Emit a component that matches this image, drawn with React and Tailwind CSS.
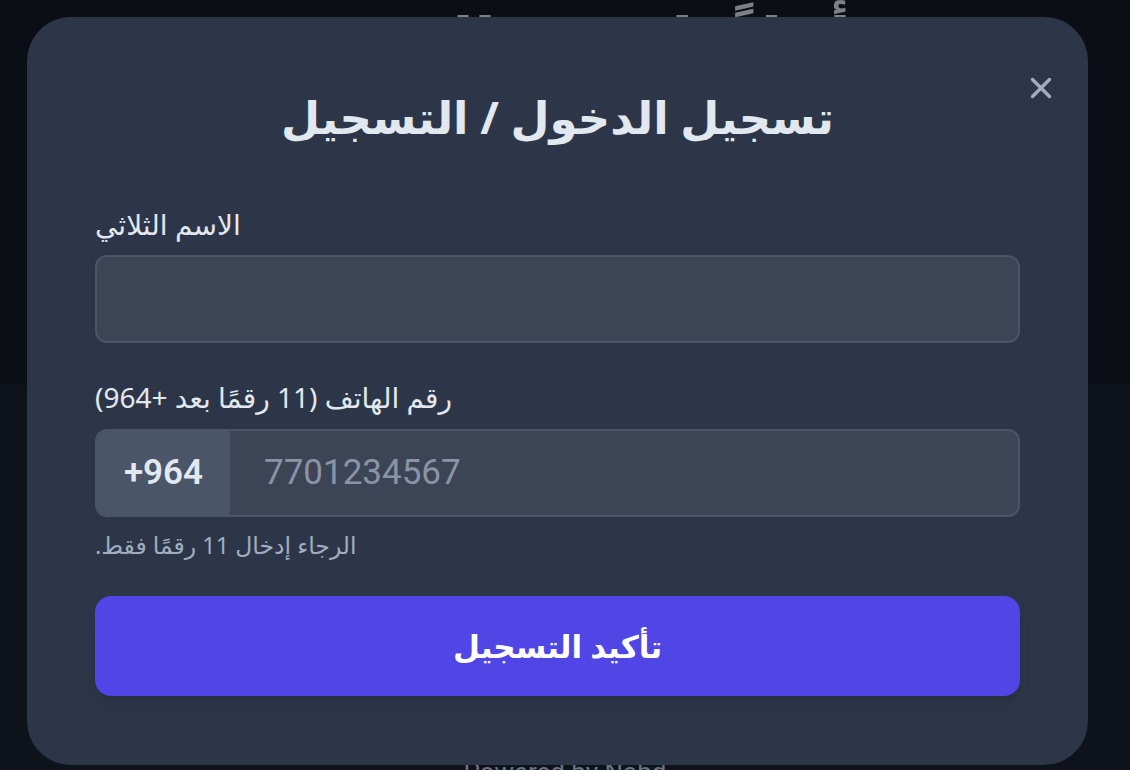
import { X } from 'lucide-react';

export default function App() {
  return (
    <div className="relative w-[1130px] h-[770px] overflow-hidden bg-[#0b0e14] font-['Noto_Sans','DejaVu_Sans',sans-serif]">
      {/* page behind the dialog */}
      <div className="flex flex-col h-full">
        <div className="h-[385px] flex justify-center">
          <h1 dir="rtl" className="mt-[0px] text-[64px] leading-[80px] font-bold text-[#7b8089]">
            أهلاً بك في المنصة
          </h1>
        </div>
        <div className="flex-1 bg-[#0e121a] flex items-end justify-center">
          <p className="mb-[-22px] text-[26px] leading-[40px] text-[#6b7280] font-['Roboto',sans-serif]">
            Powered by Nabd
          </p>
        </div>
      </div>

      {/* dialog */}
      <div className="absolute left-[27px] top-[17px] w-[1061px] h-[748px] rounded-[44px] bg-[#2d3648] px-[68px] pt-[68px]">
        <button className="absolute right-[30px] top-[54px] w-[34px] h-[34px] flex items-center justify-center text-[#a3adbd]">
          <X size={34} strokeWidth={2.4} />
        </button>

        <h2 dir="rtl" className="text-center text-[45px] leading-[64px] font-bold text-[#e2e8f0]">
          تسجيل الدخول / التسجيل
        </h2>

        <label dir="rtl" className="block mt-[56px] text-left text-[28px] leading-[38px] text-[#e2e8f0]">
          الاسم الثلاثي
        </label>
        <div className="mt-[12px] h-[88px] rounded-[12px] border-2 border-[#4a5568] bg-[#3c4556]" />

        <label dir="rtl" className="block mt-[35px] text-left text-[28px] leading-[38px] text-[#e2e8f0]">
          رقم الهاتف (11 رقمًا بعد +964)
        </label>
        <div className="mt-[13px] h-[88px] flex rounded-[12px] border-2 border-[#4a5568] bg-[#3c4556] overflow-hidden">
          <div className="w-[133px] flex items-center justify-center bg-[#4a5568] text-[35px] font-semibold text-[#e2e8f0] font-['Roboto',sans-serif]">
            +964
          </div>
          <div className="flex-1 flex items-center pl-[34px] text-[35px] text-[#8a94a6] font-['Roboto',sans-serif]">
            7701234567
          </div>
        </div>
        <p dir="rtl" className="mt-[12px] text-left text-[23.5px] leading-[32px] text-[#a0aec0]">
          الرجاء إدخال 11 رقمًا فقط.
        </p>

        <button className="mt-[35px] w-full h-[100px] rounded-[16px] bg-[#4f46e5] text-white text-[31px] font-bold shadow-lg">
          <span dir="rtl">تأكيد التسجيل</span>
        </button>
      </div>
    </div>
  );
}
